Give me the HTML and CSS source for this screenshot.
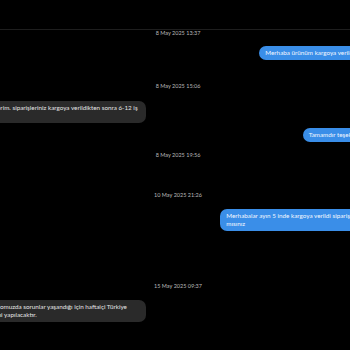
FILE: index.html
```html
<!DOCTYPE html>
<html lang="tr">
<head>
<meta charset="utf-8">
<title>Mesajlar</title>
<link rel="stylesheet" href="styles.css">
</head>
<body>
<div class="topbar"></div>
<main class="chat">
  <div class="date d1">8 May 2025 13:37</div>
  <div class="row sent m-b1"><div class="bubble out">Merhaba ürünüm kargoya verildi mi acaba?</div></div>

  <div class="date d2">8 May 2025 15:06</div>
  <div class="row recv m-b2"><div class="bubble in">Rica ederim. siparişleriniz kargoya verildikten sonra 6-12 iş<br>günü</div></div>
  <div class="row sent m-b3"><div class="bubble out">Tamamdır teşekkür ederim.</div></div>

  <div class="date d3">8 May 2025 19:56</div>
  <div class="date d4">10 May 2025 21:26</div>
  <div class="row sent m-b4"><div class="bubble out">Merhabalar ayın 5 inde kargoya verildi siparişimi bakabilir<br>mısınız</div></div>

  <div class="date d5">15 May 2025 09:37</div>
  <div class="row recv m-b5"><div class="bubble in">Ana depomuzda sorunlar yaşandığı için haftaiçi Türkiye<br>içi teslimi yapılacaktır.</div></div>
</main>
</body>
</html>
```

FILE: styles.css
```css
html, body {
  margin: 0;
  padding: 0;
  background: #000;
  overflow: hidden;
}
body {
  width: 350px;
  height: 350px;
  font-family: "Lato", "Liberation Sans", sans-serif;
}
.topbar {
  height: 29px;
  border-bottom: 1px solid #1e1e1e;
}
.chat {
  display: flex;
  flex-direction: column;
  margin: 0 -39px 0 -33px;
}
.date {
  text-align: center;
  font-size: 5.5px;
  line-height: 7px;
  color: #b9b9b9;
}
.d2 { margin-top: 23px; }
.d3 { margin-top: 10px; }
.d4 { margin-top: 33px; }
.d5 { margin-top: 52px; }
.row { display: flex; }
.sent { justify-content: flex-end; }
.recv { justify-content: flex-start; }
.m-b1 { margin-top: 9px; }
.m-b2 { margin-top: 11px; }
.m-b3 { margin-top: 5px; }
.m-b4 { margin-top: 10px; }
.m-b5 { margin-top: 10px; }
.bubble {
  font-size: 6.3px;
  line-height: 8px;
  padding: 3px 6px;
  white-space: nowrap;
}
.out {
  background: #3a8ee8;
  color: #f2f7ff;
  border-radius: 7px;
}
.in {
  width: 179px;
  box-sizing: border-box;
  padding: 3px 10px;
  background: #2a2a2a;
  color: #e4e4e4;
  border-radius: 7px;
}
```
